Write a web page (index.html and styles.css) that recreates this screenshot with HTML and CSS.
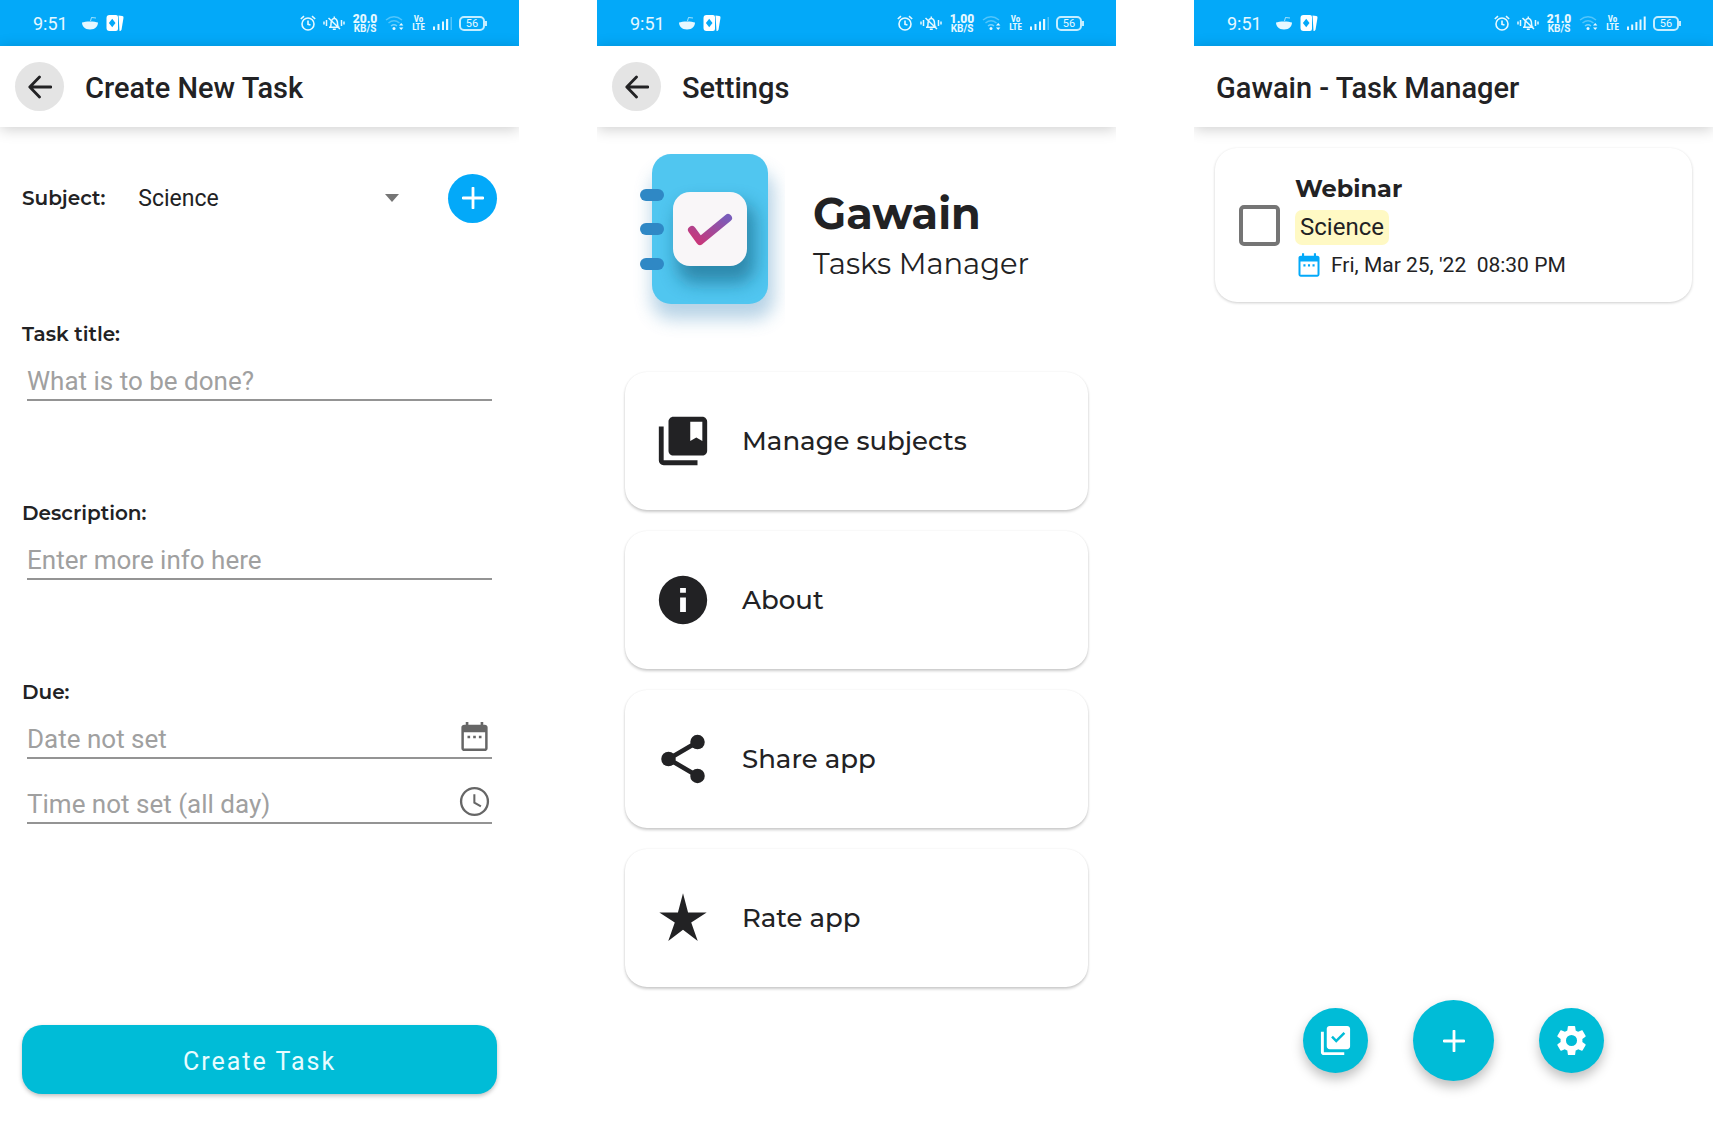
FILE: index.html
```html
<!DOCTYPE html>
<html lang="en">
<head>
<meta charset="utf-8">
<meta name="viewport" content="width=device-width, initial-scale=1">
<title>Gawain - Task Manager</title>
<link rel="stylesheet" href="styles.css">
</head>
<body>
<svg class="sprite" aria-hidden="true">
  <symbol id="i-bowl" viewBox="0 0 16 16"><path d="M0 7.500C3 6 13 6 16 7.500C16 11 13.500 14.500 8 14.500S0 11 0 7.500z" fill="currentColor"/><path d="M8.500 6L9.500 2.500L14 3" fill="none" stroke="currentColor" stroke-width="1" opacity=".7"/></symbol>
  <symbol id="i-cards" viewBox="0 0 18 18"><path d="M12.500 1.500l3.800.5q1.400.3 1.200 1.700l-2 12q-.3 1.300-2 1.300z" fill="currentColor"/><path fill-rule="evenodd" d="M3.500 1h6.500q2 0 2 2v12q0 2-2 2h-6.500q-3 0-3-3v-10q0-3 3-3zM6.200 4.800L2.900 9l3.300 4.200L9.500 9z" fill="currentColor"/></symbol>
  <symbol id="i-alarm" viewBox="0 0 16 16"><g fill="none" stroke="currentColor" stroke-width="1.600"><circle cx="8" cy="9" r="6"/><path d="M8 5.500V9.300L10.500 10M.8 4L4 1.200M15.200 4L12 1.200"/></g></symbol>
  <symbol id="i-mute" viewBox="0 0 22 16"><g fill="none" stroke="currentColor" stroke-width="1.500"><path d="M6 12.200h10.500M7.500 12c.8-2 .3-3.500.8-5.500.5-1.900 1.500-3 3-3s2.500 1.100 3 3c.4 2 0 3.500.9 5.500M11.300 1.500v2M9.800 14.200h3M5.500 3l11.500 11M1 6.500v3M3.500 5v6M18.500 5v6M21 6.500v3"/></g></symbol>
  <symbol id="i-wifi" viewBox="0 0 20 16"><g fill="none" stroke="currentColor" stroke-width="1.500"><path opacity=".35" d="M1 5Q9 -1.500 17 5M3.500 8Q9 3.500 14.500 8"/><path opacity=".5" d="M6 11Q9 8.500 12 11"/></g><circle cx="9" cy="13.500" r="1.500" fill="currentColor"/><path d="M14 10.500L16.200 8l2.200 2.500zM14 12.500l2.200 2.500 2.200-2.500z" fill="currentColor"/></symbol>
  <symbol id="i-signal" viewBox="0 0 20 16"><path d="M1 11.500h2V15H1zM5.500 9h2v6h-2zM10 6.500h2V15h-2zM14 4h2.200v11H14z" fill="currentColor"/><path opacity=".35" d="M18.500 2H20v13h-1.500z" fill="currentColor"/></symbol>
  <symbol id="i-signal-full" viewBox="0 0 20 16"><path d="M1 11.500h2V15H1zM5.200 9.500h2V15h-2zM9.400 7h2v8h-2zM13.500 4.500h2V15h-2zM17.700 1.500h2V15h-2z" fill="currentColor"/></symbol>
  <symbol id="i-back" viewBox="0 0 24 24"><path d="M23 12H2M11.500 2L1.800 12l9.700 10" fill="none" stroke="currentColor" stroke-width="2.800" stroke-linecap="round" stroke-linejoin="round"/></symbol>
  <symbol id="i-plus" viewBox="0 0 22 22"><path d="M11 1v20M1 11h20" fill="none" stroke="currentColor" stroke-width="2.800" stroke-linecap="round"/></symbol>
  <symbol id="i-calendar" viewBox="0 0 24 24"><path fill="currentColor" d="M19 4h-1V2h-1.800v2H7.800V2H6v2H5c-1.100 0-2 .7-2 1.800V20c0 1.100.9 2 2 2h14c1.100 0 2-.9 2-2V5.800C21 4.700 20.100 4 19 4zm.3 16.300H4.700V9h14.600zM7.200 11.400H9v1.800H7.200zM11.100 11.400h1.800v1.800h-1.800zM15 11.400h1.800v1.800H15z"/></symbol>
  <symbol id="i-clock" viewBox="0 0 24 24"><g fill="none" stroke="currentColor"><circle cx="12" cy="12" r="9.200" stroke-width="1.600"/><path d="M11.900 7v5.800l4.500 2.500" stroke-width="1.400"/></g></symbol>
  <symbol id="i-subjects" viewBox="0 0 24 24"><path fill="currentColor" d="M4 6H2v14c0 1.100.9 2 2 2h14v-2H4zM20 2H8c-1.100 0-2 .9-2 2v12c0 1.100.9 2 2 2h12c1.100 0 2-.9 2-2V4c0-1.100-.9-2-2-2zm0 10l-2.500-1.500L15 12V4h5z"/></symbol>
  <symbol id="i-info" viewBox="0 0 24 24"><path fill="currentColor" d="M12 2a10 10 0 1 0 0 20 10 10 0 0 0 0-20zm1.200 15h-2.400v-6h2.400zm0-8h-2.400V7h2.400z"/></symbol>
  <symbol id="i-share" viewBox="0 0 24 24"><path d="M18 5L6 12l12 7" fill="none" stroke="currentColor" stroke-width="1.900"/><g fill="currentColor"><circle cx="18" cy="5" r="3"/><circle cx="6" cy="12" r="3"/><circle cx="18" cy="19" r="3"/></g></symbol>
  <symbol id="i-star" viewBox="0 0 24 24"><path fill="currentColor" d="M12 1.800l2.100 7.900h7.700l-6.400 4.200 2.700 7.600-6.100-4.600-6.100 4.600 2.700-7.600-6.400-4.200h7.700z"/></symbol>
  <symbol id="i-done" viewBox="0 0 24 24"><path fill="currentColor" d="M20 2H8c-1.100 0-2 .9-2 2v12c0 1.100.9 2 2 2h12c1.100 0 2-.9 2-2V4c0-1.100-.9-2-2-2zm-7.500 11.500L9 10l1.200-1.200 2.300 2.300 5-5 1.200 1.200zM4 6H2v14c0 1.100.9 2 2 2h14v-2H4z"/></symbol>
  <symbol id="i-gear" viewBox="0 0 24 24"><path fill="currentColor" d="M19.430 12.980c.04-.32.070-.64.070-.98s-.03-.66-.07-.98l2.110-1.650c.19-.15.24-.42.12-.64l-2-3.460c-.12-.22-.39-.3-.61-.22l-2.490 1c-.52-.4-1.080-.73-1.690-.98l-.38-2.650C14.460 2.180 14.250 2 14 2h-4c-.25 0-.46.18-.49.42l-.38 2.650c-.61.25-1.170.59-1.690.98l-2.490-1c-.23-.09-.49 0-.61.22l-2 3.460c-.13.22-.07.49.12.64l2.110 1.650c-.04.32-.07.65-.07.98s.03.66.07.98l-2.110 1.650c-.19.15-.24.42-.12.64l2 3.460c.12.22.39.3.61.22l2.490-1c.52.4 1.080.73 1.690.98l.38 2.650c.03.24.24.42.49.42h4c.25 0 .46-.18.49-.42l.38-2.650c.61-.25 1.170-.59 1.690-.98l2.490 1c.23.09.49 0 .61-.22l2-3.460c.12-.22.07-.49-.12-.64zM12 15.800a3.800 3.800 0 1 1 0-7.600 3.800 3.800 0 0 1 0 7.600z"/></symbol>
</svg>

<div class="screens">
  <section class="screen">
    <div class="status">
      <span class="time">9:51</span>
      <svg class="s-bowl"><use href="#i-bowl"/></svg>
      <svg class="s-cards"><use href="#i-cards"/></svg>
      <div class="status-right">
        <svg class="s-alarm"><use href="#i-alarm"/></svg>
        <svg class="s-mute"><use href="#i-mute"/></svg>
        <span class="speed"><b>20.0</b><small>KB/S</small></span>
        <svg class="s-wifi"><use href="#i-wifi"/></svg>
        <span class="volte"><span>Vo</span><span>LTE</span></span>
        <svg class="s-signal"><use href="#i-signal"/></svg>
        <span class="battery">56</span>
      </div>
    </div>
    <header class="appbar">
      <button class="back" aria-label="Back"><svg><use href="#i-back"/></svg></button>
      <h1>Create New Task</h1>
    </header>
    <form class="form">
      <div class="subject-row">
        <label class="label" for="subject">Subject:</label>
        <div class="select">
          <select id="subject"><option>Science</option></select>
        </div>
        <button class="add" type="button" aria-label="Add subject"><svg><use href="#i-plus"/></svg></button>
      </div>
      <div class="field">
        <label class="label" for="title">Task title:</label>
        <div class="line"><input id="title" type="text" placeholder="What is to be done?"></div>
      </div>
      <div class="field">
        <label class="label" for="desc">Description:</label>
        <div class="line"><input id="desc" type="text" placeholder="Enter more info here"></div>
      </div>
      <div class="field">
        <label class="label" for="date">Due:</label>
        <div class="line"><input id="date" type="text" placeholder="Date not set"><button type="button" aria-label="Pick date"><svg><use href="#i-calendar"/></svg></button></div>
        <div class="line line-next"><input type="text" aria-label="Due time" placeholder="Time not set (all day)"><button type="button" aria-label="Pick time"><svg><use href="#i-clock"/></svg></button></div>
      </div>
      <button class="submit" type="button">Create Task</button>
    </form>
  </section>

  <section class="screen">
    <div class="status">
      <span class="time">9:51</span>
      <svg class="s-bowl"><use href="#i-bowl"/></svg>
      <svg class="s-cards"><use href="#i-cards"/></svg>
      <div class="status-right">
        <svg class="s-alarm"><use href="#i-alarm"/></svg>
        <svg class="s-mute"><use href="#i-mute"/></svg>
        <span class="speed"><b>1.00</b><small>KB/S</small></span>
        <svg class="s-wifi"><use href="#i-wifi"/></svg>
        <span class="volte"><span>Vo</span><span>LTE</span></span>
        <svg class="s-signal"><use href="#i-signal"/></svg>
        <span class="battery">56</span>
      </div>
    </div>
    <header class="appbar">
      <button class="back" aria-label="Back"><svg><use href="#i-back"/></svg></button>
      <h1>Settings</h1>
    </header>
    <main class="settings">
      <div class="brand">
        <svg class="logo" viewBox="0 0 160 214" aria-hidden="true">
          <defs>
            <linearGradient id="tick" x1="0" y1="1" x2="1" y2="0"><stop offset="0" stop-color="#cc3577"/><stop offset="1" stop-color="#7a5cba"/></linearGradient>
            <filter id="soft" x="-50%" y="-50%" width="200%" height="200%"><feGaussianBlur stdDeviation="9"/></filter>
            <clipPath id="cover"><rect x="27" y="27" width="116" height="150" rx="19"/></clipPath>
          </defs>
          <rect x="27" y="44" width="122" height="148" rx="20" fill="#4a90c0" opacity=".4" filter="url(#soft)"/>
          <rect x="27" y="27" width="116" height="150" rx="19" fill="#50c6f0"/>
          <g clip-path="url(#cover)"><rect x="52" y="76" width="78" height="80" rx="17" fill="#12607f" opacity=".6" filter="url(#soft)"/></g>
          <g fill="#2f88c5"><rect x="15" y="62" width="24" height="12" rx="6"/><rect x="15" y="96" width="24" height="12" rx="6"/><rect x="15" y="131" width="24" height="12" rx="6"/></g>
          <rect x="48" y="65" width="74" height="74" rx="17" fill="#f9f6f8"/>
          <path d="M67 103L75 114L103 91" fill="none" stroke="url(#tick)" stroke-width="8" stroke-linecap="round" stroke-linejoin="round"/>
        </svg>
        <div class="brand-text">
          <h2>Gawain</h2>
          <p>Tasks Manager</p>
        </div>
      </div>
      <nav class="menu">
        <a href="#subjects"><svg><use href="#i-subjects"/></svg>Manage subjects</a>
        <a href="#about"><svg><use href="#i-info"/></svg>About</a>
        <a href="#share"><svg><use href="#i-share"/></svg>Share app</a>
        <a href="#rate"><svg><use href="#i-star"/></svg>Rate app</a>
      </nav>
    </main>
  </section>

  <section class="screen">
    <div class="status">
      <span class="time">9:51</span>
      <svg class="s-bowl"><use href="#i-bowl"/></svg>
      <svg class="s-cards"><use href="#i-cards"/></svg>
      <div class="status-right">
        <svg class="s-alarm"><use href="#i-alarm"/></svg>
        <svg class="s-mute"><use href="#i-mute"/></svg>
        <span class="speed"><b>21.0</b><small>KB/S</small></span>
        <svg class="s-wifi"><use href="#i-wifi"/></svg>
        <span class="volte"><span>Vo</span><span>LTE</span></span>
        <svg class="s-signal"><use href="#i-signal-full"/></svg>
        <span class="battery">56</span>
      </div>
    </div>
    <header class="appbar appbar-home">
      <h1>Gawain - Task Manager</h1>
    </header>
    <main class="home">
      <article class="task">
        <input type="checkbox" id="webinar">
        <div class="task-body">
          <label for="webinar">Webinar</label>
          <span class="tag">Science</span>
          <div class="when"><svg><use href="#i-calendar"/></svg><span>Fri, Mar 25, '22&nbsp; 08:30 PM</span></div>
        </div>
      </article>
      <div class="fabs">
        <button class="fab" aria-label="Completed tasks"><svg><use href="#i-done"/></svg></button>
        <button class="fab fab-main" aria-label="New task"><svg><use href="#i-plus"/></svg></button>
        <button class="fab" aria-label="Settings"><svg><use href="#i-gear"/></svg></button>
      </div>
    </main>
  </section>
</div>
</body>
</html>
```
FILE: styles.css
```css
:root {
  --blue: #03a9f9;
  --teal: #00bcd7;
  --ink: #222224;
  --display: "Montserrat", "Inter", sans-serif;
}

* { box-sizing: border-box; }

body {
  margin: 0;
  background: #fff;
  color: var(--ink);
  font-family: "Roboto", sans-serif;
}

h1, h2, p { margin: 0; }

button {
  display: flex;
  align-items: center;
  justify-content: center;
  padding: 0;
  border: 0;
  background: none;
  color: inherit;
  font: inherit;
}

svg { display: block; flex: none; }

.sprite { display: none; }

.screens {
  display: grid;
  grid-template-columns: repeat(3, minmax(0, 1fr));
  gap: 78px;
  min-height: 100vh;
}

.screen {
  display: flex;
  flex-direction: column;
  overflow: hidden;
}

/* Status bar */
.status {
  display: flex;
  align-items: center;
  height: 46px;
  padding: 0 32px 0 33px;
  background: var(--blue);
  color: #e6f8ff;
}

.time { width: 49px; font-size: 18px; }
.s-bowl { width: 16px; height: 16px; margin-right: 8px; }
.s-cards { width: 18px; height: 18px; color: #fff; }

.status-right {
  display: flex;
  align-items: center;
  gap: 7px;
  margin-left: auto;
}

.s-alarm { width: 16px; height: 16px; }
.s-mute { width: 22px; height: 16px; }
.s-wifi { width: 20px; height: 16px; }
.s-signal { width: 20px; height: 16px; }

.speed, .volte {
  display: flex;
  flex-direction: column;
  align-items: center;
  font-weight: 700;
}

.speed { width: 26px; }
.speed b { font-size: 12px; line-height: 10px; }
.speed small { font-size: 10px; line-height: 9px; }

.volte {
  width: 13px;
  font-family: "Roboto Condensed", "Liberation Sans Narrow", "Roboto", sans-serif;
  font-size: 9px;
  line-height: 8px;
}

.battery {
  position: relative;
  width: 26px;
  height: 15px;
  margin-right: 2px;
  border: 2px solid #c4edff;
  border-radius: 5px;
  font-size: 11px;
  line-height: 11px;
  text-align: center;
}

.battery::after {
  content: "";
  position: absolute;
  top: 3px;
  right: -4px;
  width: 2px;
  height: 5px;
  background: #c4edff;
}

/* App bar */
.appbar {
  display: flex;
  align-items: center;
  gap: 21px;
  height: 81px;
  padding: 0 15px;
  box-shadow: 0 2px 14px rgba(0, 0, 0, .2);
}

.appbar-home { padding: 0 22px; }

.appbar h1 {
  padding-top: 3px;
  font-size: 29px;
  font-weight: 500;
  line-height: 36px;
}

.back {
  width: 49px;
  height: 49px;
  border-radius: 50%;
  background: #e4e4e4;
}

.back svg { width: 24px; height: 24px; }

/* Create form */
.form {
  display: flex;
  flex: 1;
  flex-direction: column;
  gap: 100px;
  padding: 47px 22px 31px;
}

.label {
  font-family: var(--display);
  font-size: 20px;
  font-weight: 600;
  line-height: 24px;
}

.subject-row { display: flex; align-items: center; height: 48px; }

.select {
  position: relative;
  flex: 1;
  margin: 0 49px 0 33px;
}

.select::after {
  content: "";
  position: absolute;
  top: 50%;
  right: 0;
  margin-top: -4px;
  border: 7px solid transparent;
  border-top: 8px solid #757575;
  border-bottom: 0;
  pointer-events: none;
}

.select select {
  display: block;
  width: 100%;
  padding: 2px 0 0;
  border: 0;
  appearance: none;
  background: none;
  color: var(--ink);
  font: 23px/32px "Roboto", sans-serif;
}

.add {
  width: 49px;
  height: 49px;
  border-radius: 50%;
  background: var(--blue);
  color: #fff;
}

.add svg { width: 22px; height: 22px; }

.field { display: flex; flex-direction: column; }

.line {
  display: flex;
  height: 40px;
  margin: 15px 5px 0;
  border-bottom: 2px solid #949494;
}

.line-next { margin-top: 25px; }

.line input {
  flex: 1;
  min-width: 0;
  padding: 2px 0 0;
  border: 0;
  outline: 0;
  background: none;
  color: var(--ink);
  font: 26px/36px "Roboto", sans-serif;
}

.line input::placeholder { color: #a0a0a0; opacity: 1; }

.line button { align-self: flex-start; color: #666; }
.line svg { width: 35px; height: 35px; }

.submit {
  height: 69px;
  margin-top: auto;
  padding-top: 3px;
  border-radius: 20px;
  background: var(--teal);
  box-shadow: 0 2px 4px rgba(0, 0, 0, .25);
  color: #e8fcff;
  font-size: 25px;
  letter-spacing: 2px;
}

/* Settings */
.settings { padding: 0 28px; }

.brand {
  display: flex;
  align-items: center;
  gap: 28px;
  margin-bottom: 31px;
  font-family: var(--display);
}

.logo { width: 160px; height: 214px; }

.brand-text { display: grid; gap: 4px; }
.brand h2 { font-size: 43px; font-weight: 700; line-height: 56px; }
.brand p { font-size: 29px; line-height: 36px; }

.menu { display: grid; gap: 21px; }

.menu a {
  display: flex;
  align-items: center;
  gap: 30px;
  height: 138px;
  padding: 0 29px;
  border-radius: 22px;
  box-shadow: 0 2px 3px rgba(0, 0, 0, .2), 0 0 2px rgba(0, 0, 0, .08);
  color: var(--ink);
  font: 500 26px/36px var(--display);
  text-decoration: none;
}

.menu svg { width: 58px; height: 58px; }

/* Home */
.home {
  display: flex;
  flex: 1;
  flex-direction: column;
  padding: 21px 21px 44px;
}

.task {
  display: flex;
  align-items: center;
  gap: 15px;
  padding: 22px 24px;
  border-radius: 22px;
  background: #fff;
  box-shadow: 0 1px 3px rgba(0, 0, 0, .2);
}

.task input {
  flex: none;
  width: 41px;
  height: 41px;
  margin: 0;
  border: 4px solid #757575;
  border-radius: 5px;
  appearance: none;
}

.task-body {
  display: grid;
  justify-items: start;
  gap: 5px;
  padding-top: 3px;
}

.task label {
  font-family: var(--display);
  font-size: 24px;
  font-weight: 700;
  line-height: 32px;
}

.tag {
  padding: 0 5px;
  border-radius: 7px;
  background: #fff9c4;
  font-size: 24px;
  line-height: 35px;
}

.when {
  display: flex;
  align-items: center;
  gap: 8px;
  font-size: 21px;
  line-height: 30px;
}

.when svg { width: 28px; height: 28px; color: var(--blue); }

.fabs {
  display: flex;
  align-items: center;
  justify-content: center;
  gap: 45px;
  margin-top: auto;
}

.fab {
  width: 65px;
  height: 65px;
  border-radius: 50%;
  background: var(--teal);
  box-shadow: 0 6px 12px rgba(0, 0, 0, .25);
  color: #fff;
}

.fab svg { width: 35px; height: 35px; }
.fab-main { width: 81px; height: 81px; }
.fab-main svg { width: 22px; height: 22px; }
```
